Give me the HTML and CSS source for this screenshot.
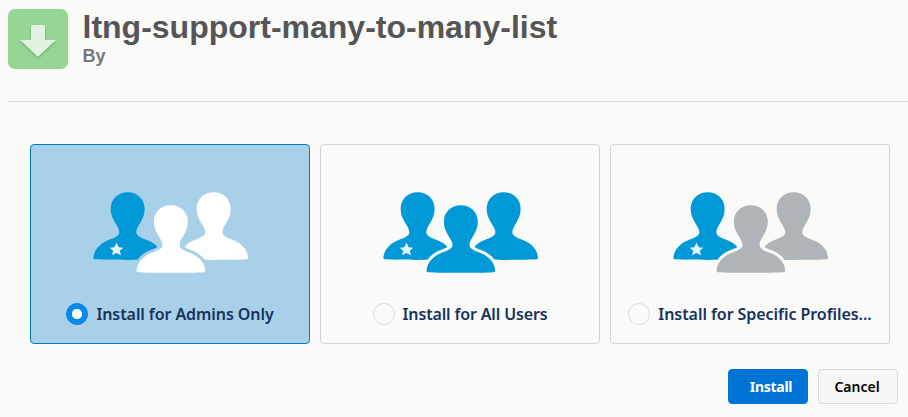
FILE: index.html
```html
<!DOCTYPE html>
<html lang="en">
<head>
<meta charset="utf-8">
<title>Install Package</title>
<link rel="stylesheet" href="styles.css">
</head>
<body>
<svg class="defs" aria-hidden="true">
  <defs>
    <path id="person" d="M128 37C158 37 179 58 179 87C179 120 154 138 154 156C154 168 166 172 178 177C211 188 230 208 231 234Q231 237.500 226 238C190 240.500 66 240.500 30 238Q25 237.500 25 234C27 208 46 188 78 177C91 172 103 168 103 156C103 138 77 120 77 87C77 58 98 37 128 37Z"/>
    <path id="star" d="M94.500 187.500L101 202L115 203L104.500 212.500L108 226L94.500 219L81 226L84.500 212.500L74 203L88 202Z"/>
  </defs>
</svg>
<header class="header">
  <svg class="logo" viewBox="0 0 60 60">
    <rect width="60" height="60" rx="7" fill="#96d596"/>
    <path class="arrow" d="M23 16H37V31H48L30 48L12 31H23Z"/>
  </svg>
  <div>
    <h1 class="title">ltng-support-many-to-many-list</h1>
    <p class="by">By</p>
  </div>
</header>
<main class="main">
  <div class="options">
    <label class="card selected">
      <svg class="people" viewBox="0 0 510 300">
        <use href="#person" class="lead"/><use href="#star" class="star"/>
        <use href="#person" class="other" x="258"/>
        <use href="#person" class="other front" x="129.5" y="38.5"/>
      </svg>
      <span class="choice"><span class="radio"></span><span class="text admins">Install for Admins Only</span></span>
    </label>
    <label class="card all">
      <svg class="people" viewBox="0 0 510 300">
        <use href="#person" class="lead"/><use href="#star" class="star"/>
        <use href="#person" class="other" x="258"/>
        <use href="#person" class="other front" x="129.5" y="38.5"/>
      </svg>
      <span class="choice"><span class="radio"></span><span class="text users">Install for All Users</span></span>
    </label>
    <label class="card specific">
      <svg class="people" viewBox="0 0 510 300">
        <use href="#person" class="lead"/><use href="#star" class="star"/>
        <use href="#person" class="other" x="258"/>
        <use href="#person" class="other front" x="129.5" y="38.5"/>
      </svg>
      <span class="choice"><span class="radio"></span><span class="text profiles">Install for Specific Profiles...</span></span>
    </label>
  </div>
  <div class="actions">
    <button class="btn primary">Install</button>
    <button class="btn">Cancel</button>
  </div>
</main>
</body>
</html>
```

FILE: styles.css
```css
* { box-sizing: border-box; }
body {
  margin: 0;
  height: 417px;
  overflow: hidden;
  background: #fafaf9;
  font-family: "Noto Sans", sans-serif;
}
.defs { display: none; }
.header {
  display: flex;
  gap: 14.5px;
  height: 102px;
  margin-left: 8px;
  padding-top: 9px;
  border-bottom: 1px solid #dcdcdc;
  font-family: "Liberation Sans", Arial, sans-serif;
}
.logo { width: 60px; height: 60px; }
.arrow { fill: #e0f2e0; filter: drop-shadow(0 1px 1px rgba(0, 60, 0, .35)); }
.title { margin: 0; font-size: 32px; line-height: 36px; color: #555; white-space: nowrap; }
.by { margin: 0; font-size: 18px; line-height: 22px; font-weight: 700; color: #777; }
.main { padding: 42px 10px 0 30px; }
.options { display: flex; gap: 10px; }
.card {
  --tone: #0099d8;
  --surface: #fafaf9;
  display: flex;
  flex-direction: column;
  align-items: center;
  width: 280px;
  height: 200px;
  padding-top: 35px;
  border: 1px solid #d0d3d9;
  border-radius: 4px;
  background: var(--surface);
}
.selected { --tone: #fff; --surface: #a8d1e9; border-color: #007db6; }
.specific { --tone: #afb4b8; }
.people { display: block; width: 170px; height: 100px; }
.lead { fill: #0099d8; }
.star { fill: #e3f4fc; }
.other { fill: var(--tone); }
.front { stroke: var(--surface); stroke-width: 18px; paint-order: stroke; }
.choice { display: flex; align-items: center; gap: 8px; height: 22px; margin-top: 23px; }
.radio { width: 22px; height: 22px; flex: none; border: 1px solid #d8dbdf; border-radius: 50%; }
.selected .radio { border: 1px solid #0b7fdc; background: radial-gradient(circle, #fff 4.8px, #078af0 5.4px); }
.text { font-size: 16px; line-height: 22px; font-weight: 600; color: #16325c; white-space: nowrap; }
.admins { letter-spacing: -.08px; }
.users { letter-spacing: -.15px; }
.profiles { letter-spacing: -.06px; }
.actions { display: flex; justify-content: flex-end; gap: 10px; margin-top: 25px; }
.btn {
  width: 80px;
  height: 35px;
  padding: 0 2px 0 0;
  border: 1px solid #d8dade;
  border-radius: 4px;
  background: #f7f7f8;
  font: 600 14px "Noto Sans", sans-serif;
  color: #000;
}
.primary {
  padding: 0 0 0 6px;
  border-color: #0074d4;
  background: #0074d4;
  color: #fff;
  font-weight: 700;
  letter-spacing: -.3px;
}
```
